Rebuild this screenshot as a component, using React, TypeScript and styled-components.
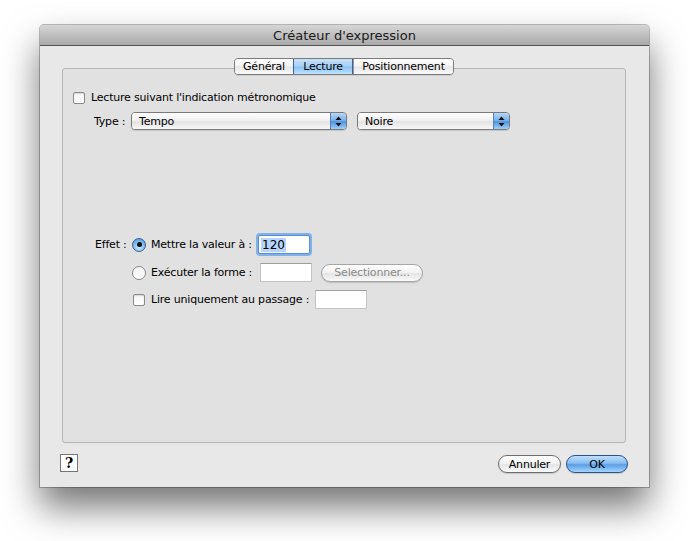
import { FC } from 'react'
import styled, { createGlobalStyle } from 'styled-components'

const GlobalStyle = createGlobalStyle`
  html, body {
    margin: 0;
    padding: 0;
    background: #ffffff;
  }
  body {
    font-family: 'DejaVu Sans', 'Liberation Sans', sans-serif;
    font-size: 11px;
    letter-spacing: -0.2px;
    color: #000;
  }
  * {
    box-sizing: border-box;
  }
`

const Page = styled.div`
  width: 688px;
  height: 541px;
  padding: 25px 0 0 40px;
`

const Window = styled.div`
  width: 609px;
  height: 462px;
  display: flex;
  flex-direction: column;
  background: #e8e8e8;
  border-radius: 4px 4px 0 0;
  box-shadow: 0 20px 36px rgba(0, 0, 0, 0.55), 0 0 0 1px rgba(0, 0, 0, 0.25);
  overflow: hidden;
`

const TitleBar = styled.div`
  height: 21px;
  flex: 0 0 21px;
  display: flex;
  align-items: center;
  justify-content: center;
  background: linear-gradient(#d6d6d6, #a9a9a9);
  border-bottom: 1px solid #535353;
  font-size: 13px;
  letter-spacing: 0;
  color: #1a1a1a;
`

const Body = styled.div`
  flex: 1;
  display: flex;
  flex-direction: column;
  padding: 12px 23px 0 22px;
`

const TabRow = styled.div`
  display: flex;
  justify-content: center;
  margin-bottom: -7px;
  position: relative;
  z-index: 1;
`

const TabGroup = styled.div`
  display: flex;
  height: 17px;
  border: 1px solid #7b7b7b;
  border-radius: 4px;
  overflow: hidden;
  box-shadow: 0 1px 0 rgba(0, 0, 0, 0.08);
`

const Tab = styled.div<{ $active?: boolean; $w: number }>`
  width: ${(p) => p.$w}px;
  display: flex;
  align-items: center;
  justify-content: center;
  font-size: 11px;
  border-left: 1px solid ${(p) => (p.$active ? '#3c5fa6' : '#9a9a9a')};
  border-right: ${(p) => (p.$active ? '1px solid #3c5fa6' : 'none')};
  background: ${(p) =>
    p.$active
      ? 'linear-gradient(#c6e1f8 0%, #a9d1f6 45%, #8cc3f5 55%, #bfe2fd 100%)'
      : 'linear-gradient(#ffffff 0%, #f3f3f3 45%, #e6e6e6 55%, #fbfbfb 100%)'};
  &:first-child {
    border-left: none;
  }
`

const Panel = styled.div`
  height: 375px;
  flex: none;
  border: 1px solid #b5b5b5;
  border-radius: 3px;
  background: #e1e1e1;
  padding: 22px 10px 0 10px;
  display: flex;
  flex-direction: column;
`

const Row = styled.div<{ $indent?: number; $mt?: number }>`
  display: flex;
  align-items: center;
  padding-left: ${(p) => p.$indent ?? 0}px;
  margin-top: ${(p) => p.$mt ?? 0}px;
`

const Check = styled.div`
  width: 12px;
  height: 12px;
  border: 1px solid #8a8a8a;
  border-radius: 2px;
  background: linear-gradient(#f4f4f4, #ffffff);
  box-shadow: inset 0 1px 1px rgba(0, 0, 0, 0.12);
  margin-right: 6px;
  flex: none;
`

const Radio = styled.div<{ $on?: boolean }>`
  width: 14px;
  height: 14px;
  border-radius: 50%;
  border: 1px solid ${(p) => (p.$on ? '#3a5d96' : '#888')};
  background: ${(p) =>
    p.$on
      ? 'radial-gradient(circle at 50% 70%, #cfe9ff 0%, #7ab8ee 55%, #4a8ad6 100%)'
      : 'linear-gradient(#f2f2f2, #ffffff)'};
  display: flex;
  align-items: center;
  justify-content: center;
  margin-right: 5px;
  flex: none;
  &::after {
    content: '';
    display: ${(p) => (p.$on ? 'block' : 'none')};
    width: 5px;
    height: 5px;
    border-radius: 50%;
    background: #111;
  }
`

const Label = styled.span<{ $w?: number }>`
  display: inline-block;
  width: ${(p) => (p.$w ? `${p.$w}px` : 'auto')};
  white-space: nowrap;
  flex: none;
`

const Popup = styled.div<{ $w: number }>`
  width: ${(p) => p.$w}px;
  height: 18px;
  border: 1px solid #7a7a7a;
  border-radius: 4px;
  display: flex;
  overflow: hidden;
  flex: none;
  box-shadow: 0 1px 1px rgba(0, 0, 0, 0.12);
`

const PopupText = styled.div`
  flex: 1;
  padding-left: 7px;
  display: flex;
  align-items: center;
  background: linear-gradient(#ffffff 0%, #f1f1f1 45%, #e3e3e3 55%, #f7f7f7 100%);
`

const PopupArrows = styled.div`
  width: 16px;
  border-left: 1px solid #5b7fb8;
  background: linear-gradient(#b5d6f7 0%, #7db3ec 45%, #4f93e0 55%, #9dd0fb 100%);
  display: flex;
  align-items: center;
  justify-content: center;
`

const Field = styled.div<{ $w: number; $focus?: boolean }>`
  width: ${(p) => p.$w}px;
  height: 19px;
  background: #fff;
  border: 1px solid ${(p) => (p.$focus ? '#5a8ed0' : '#c4c4c4')};
  border-top-color: ${(p) => (p.$focus ? '#5a8ed0' : '#9e9e9e')};
  box-shadow: ${(p) => (p.$focus ? '0 0 0 2px #7fb1ea' : 'none')};
  border-radius: ${(p) => (p.$focus ? '2px' : '0')};
  display: flex;
  align-items: center;
  padding-left: 2px;
  flex: none;
`

const Selected = styled.span`
  background: #b5d5ff;
  font-size: 12px;
  letter-spacing: 0;
  padding: 0 1px;
`

const PillButton = styled.div<{ $w: number; $blue?: boolean; $disabled?: boolean }>`
  width: ${(p) => p.$w}px;
  height: 18px;
  border-radius: 9px;
  border: 1px solid ${(p) => (p.$blue ? '#30508c' : p.$disabled ? '#a6a6a6' : '#6e6e6e')};
  background: ${(p) =>
    p.$blue
      ? 'linear-gradient(#bfe0fb 0%, #86bdf1 45%, #5a9de6 55%, #a3d6ff 100%)'
      : 'linear-gradient(#ffffff 0%, #f3f3f3 45%, #e4e4e4 55%, #fafafa 100%)'};
  color: ${(p) => (p.$disabled ? '#8a8a8a' : '#000')};
  display: flex;
  align-items: center;
  justify-content: center;
  font-size: 11px;
  flex: none;
  box-shadow: 0 1px 1px rgba(0, 0, 0, 0.15);
`

const Spacer = styled.div<{ $w: number }>`
  width: ${(p) => p.$w}px;
  flex: none;
`

const Footer = styled.div`
  display: flex;
  align-items: center;
  padding: 12px 0 0 0;
  margin-left: -2px;
`

const HelpButton = styled.div`
  width: 18px;
  height: 18px;
  border: 1px solid #767676;
  background: #fdfdfd;
  display: flex;
  align-items: center;
  justify-content: center;
  font-family: 'DejaVu Serif', serif;
  font-weight: bold;
  font-size: 14px;
  margin-top: -2px;
`

const FooterButtons = styled.div`
  margin-left: auto;
  display: flex;
  gap: 5px;
  margin-right: -2px;
`

const Arrows: FC = () => (
  <svg width="7" height="11" viewBox="0 0 7 11">
    <path d="M3.5 0.5 L6.5 4 L0.5 4 Z" fill="#111" />
    <path d="M3.5 10.5 L6.5 7 L0.5 7 Z" fill="#111" />
  </svg>
)

const App: FC = () => {
  return (
    <Page>
      <GlobalStyle />
      <Window>
        <TitleBar>Créateur d'expression</TitleBar>
        <Body>
          <TabRow>
            <TabGroup>
              <Tab $w={58}>Général</Tab>
              <Tab $w={60} $active>
                Lecture
              </Tab>
              <Tab $w={100}>Positionnement</Tab>
            </TabGroup>
          </TabRow>
          <Panel>
            <Row>
              <Check />
              <Label>Lecture suivant l'indication métronomique</Label>
            </Row>
            <Row $indent={21} $mt={8}>
              <Label $w={37}>Type :</Label>
              <Popup $w={216}>
                <PopupText>Tempo</PopupText>
                <PopupArrows>
                  <Arrows />
                </PopupArrows>
              </Popup>
              <Spacer $w={10} />
              <Popup $w={153}>
                <PopupText>Noire</PopupText>
                <PopupArrows>
                  <Arrows />
                </PopupArrows>
              </Popup>
            </Row>
            <Row $indent={22} $mt={105}>
              <Label $w={37}>Effet :</Label>
              <Radio $on />
              <Label $w={107}>Mettre la valeur à :</Label>
              <Field $w={52} $focus>
                <Selected>120</Selected>
              </Field>
            </Row>
            <Row $indent={59} $mt={9}>
              <Radio />
              <Label $w={109}>Exécuter la forme :</Label>
              <Field $w={52} />
              <Spacer $w={9} />
              <PillButton $w={102} $disabled>
                Selectionner...
              </PillButton>
            </Row>
            <Row $indent={60} $mt={8}>
              <Check />
              <Label $w={164}>Lire uniquement au passage :</Label>
              <Field $w={52} />
            </Row>
          </Panel>
          <Footer>
            <HelpButton>?</HelpButton>
            <FooterButtons>
              <PillButton $w={63}>Annuler</PillButton>
              <PillButton $w={62} $blue>
                OK
              </PillButton>
            </FooterButtons>
          </Footer>
        </Body>
      </Window>
    </Page>
  )
}

export default App
